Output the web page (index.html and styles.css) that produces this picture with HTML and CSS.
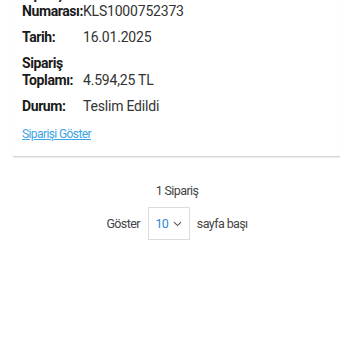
FILE: index.html
```html
<!DOCTYPE html>
<html lang="tr">
<head>
<meta charset="utf-8">
<link rel="stylesheet" href="styles.css">
</head>
<body>
<div class="card">
  <div class="rows">
    <div class="label">Sipariş Numarası:</div><div class="value">KLS1000752373</div>
    <div class="label">Tarih:</div><div class="value">16.01.2025</div>
    <div class="label">Sipariş Toplamı:</div><div class="value">4.594,25 TL</div>
    <div class="label">Durum:</div><div class="value">Teslim Edildi</div>
  </div>
  <a class="link" href="#">Siparişi Göster</a>
</div>
<div class="pager">
  <div class="count">1 Sipariş</div>
  <div class="perpage">
    <span>Göster</span>
    <div class="select"><span class="num">10</span>
      <svg class="chev" width="9" height="6" viewBox="0 0 9 6"><path d="M1 1.2 L4.5 4.6 L8 1.2" fill="none" stroke="#555" stroke-width="1.1"/></svg>
    </div>
    <span>sayfa başı</span>
  </div>
</div>
</body>
</html>
```

FILE: styles.css
```css
html, body {
  margin: 0;
  padding: 0;
  background: #fff;
}
body {
  font-family: Roboto, "Noto Sans", sans-serif;
  color: #333;
}
.card {
  margin: -14px 10px 0 13px;
  padding: 0 9px 14px 9px;
  border-bottom: 1px solid #d4d4d4;
  box-shadow: 0 1px 1px rgba(0,0,0,0.06);
}
.rows {
  display: grid;
  grid-template-columns: 61px 1fr;
  row-gap: 9px;
  font-size: 14px;
  line-height: 17px;
}
.label {
  font-weight: 700;
  color: #1a1a1a;
  letter-spacing: -0.4px;
}
.value {
  align-self: end;
  color: #333;
  letter-spacing: -0.2px;
}
.link {
  display: inline-block;
  margin-top: 12px;
  font-size: 12px;
  line-height: 14px;
  color: #3da3e6;
  text-decoration: underline;
  letter-spacing: -0.6px;
}
.pager {
  display: flex;
  flex-direction: column;
  align-items: center;
  font-size: 12.5px;
  color: #444;
  letter-spacing: -0.6px;
}
.count {
  margin-top: 27px;
  line-height: 14px;
  padding-left: 4px;
}
.perpage {
  margin-top: 9px;
  display: flex;
  align-items: center;
  gap: 7px;
  padding-left: 4px;
}
.select {
  width: 42px;
  height: 33px;
  box-sizing: border-box;
  border: 1px solid #dcdcdc;
  display: flex;
  align-items: center;
  justify-content: center;
  gap: 5px;
  margin-left: 1px;
}
.num {
  color: #2f86d6;
}
.chev {
  display: block;
  margin-top: 1px;
}
```
